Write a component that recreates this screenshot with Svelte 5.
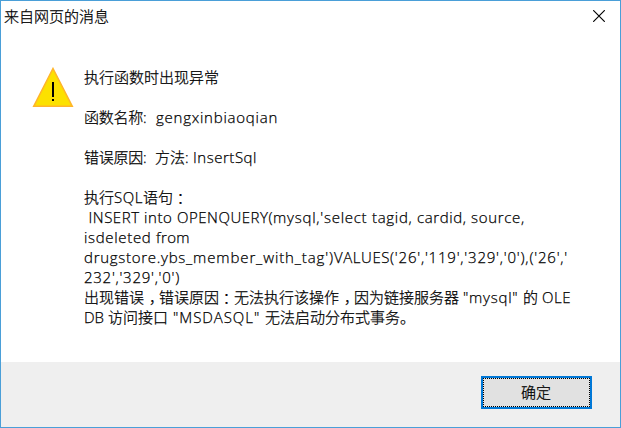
<script>
  // Each line is a list of runs: [text, advance width in px]
  const lines = [
    [['执行函数时出现异常', 135]],
    [],
    [['函数名称', 59], [': ', 13], ['gengxinbiaoqian', 122]],
    [],
    [['错误原因', 59], [': ', 12], ['方法', 30], [': ', 8], ['InsertSql', 64]],
    [],
    [['执行', 30], ['SQL', 29], ['语句', 30], ['\uFF1A', 15]],
    [[' INSERT ', 60], ['into ', 33], ['OPENQUERY(', 96], ["mysql,'", 51], ['select ', 48], ['tagid, ', 45], ['cardid, ', 54], ['source,', 54]],
    [['isdeleted ', 72], ['from', 34]],
    [['drugstore.ybs', 102], ["_member_with_tag')", 148], ['VALUES', 56], ["('26','119','329','0'),('26','", 178]],
    [["232','329','0')", 96]],
    [['出现错误', 60], ['\uFF0C', 15], ['错误原因', 60], ['\uFF1A', 15], ['无法执行该操作', 105], ['\uFF0C', 15], ['因为链接服务器', 105], [' ', 4], ['"mysql" ', 60], ['的 ', 19], ['OLE', 29]],
    [['DB ', 24], ['访问接口', 60], [' ', 5], ['"MSDASQL" ', 92], ['无法启动分布式事务。', 150]]
  ];

  // Spread the letters of a run evenly over its advance width
  function fit(node, width) {
    const natural = node.getBoundingClientRect().width;
    node.style.letterSpacing = `${(width - natural) / node.textContent.length}px`;
  }
</script>

<div class="dialog">
  <header>
    <span class="title">来自网页的消息</span>
    <svg class="close" width="12" height="12" viewBox="0 0 12 12" aria-label="关闭">
      <path d="M.2.2 11.8 11.8M11.8.2.2 11.8" stroke="#000" stroke-width="1.15" />
    </svg>
  </header>
  <main>
    <svg class="warning" width="42" height="42" viewBox="0 0 42 42">
      <path d="M21 1.5 40.3 39.3H1.7Z" fill="#fce100" stroke="#ffb52b" stroke-width="1.5" />
      <path d="M20 15h2v15h-2zM20 32h2v2h-2z" fill="#000" shape-rendering="crispEdges" />
    </svg>
    <div class="message">
      {#each lines as line}
        <div class="line">{#each line as [text, width]}<span class:colon={text === '\uFF1A'} class:comma={text === '\uFF0C'} use:fit={width}>{text}</span>{/each}</div>
      {/each}
    </div>
  </main>
  <footer>
    <button><span class="focus">确定</span></button>
  </footer>
</div>

<style>
  .dialog {
    box-sizing: border-box;
    width: 621px;
    height: 428px;
    display: flex;
    flex-direction: column;
    border: 1px solid #4a9fd8;
    background: #fff;
    color: #000;
    font: 300 15px/20px "Open Sans", "Noto Sans CJK SC", sans-serif;
    -webkit-text-stroke: 0.25px #000;
    overflow: hidden;
  }
  header {
    height: 30px;
    display: flex;
    align-items: center;
    justify-content: space-between;
    padding: 0 15px 0 3px;
  }
  .title { line-height: 20px; }
  .close { display: block; }
  main {
    flex: 1;
    display: flex;
    padding: 36px 0 0 31px;
  }
  .warning { flex: none; }
  .message { margin-left: 10px; }
  .line {
    height: 20px;
    line-height: 20px;
    white-space: pre;
  }
  /* The Traditional colon sits in the middle of its cell */
  .colon {
    font-family: "Noto Sans CJK TC", sans-serif;
    line-height: 0;
    vertical-align: -1px;
  }
  .comma { padding-left: 5px; }
  footer {
    height: 65px;
    box-sizing: border-box;
    display: flex;
    justify-content: flex-end;
    align-items: flex-start;
    padding: 14px 28px 0 0;
    background: #efefef;
  }
  button {
    box-sizing: border-box;
    width: 111px;
    height: 33px;
    padding: 0;
    display: flex;
    border: 2px solid #0078d7;
    background: #e1e1e1;
    color: #000;
    font: inherit;
    -webkit-text-stroke: inherit;
  }
  .focus {
    flex: 1;
    align-self: stretch;
    display: flex;
    align-items: center;
    justify-content: center;
    padding: 0 1px 2px 0;
    border: 1px dotted #000;
  }
</style>
